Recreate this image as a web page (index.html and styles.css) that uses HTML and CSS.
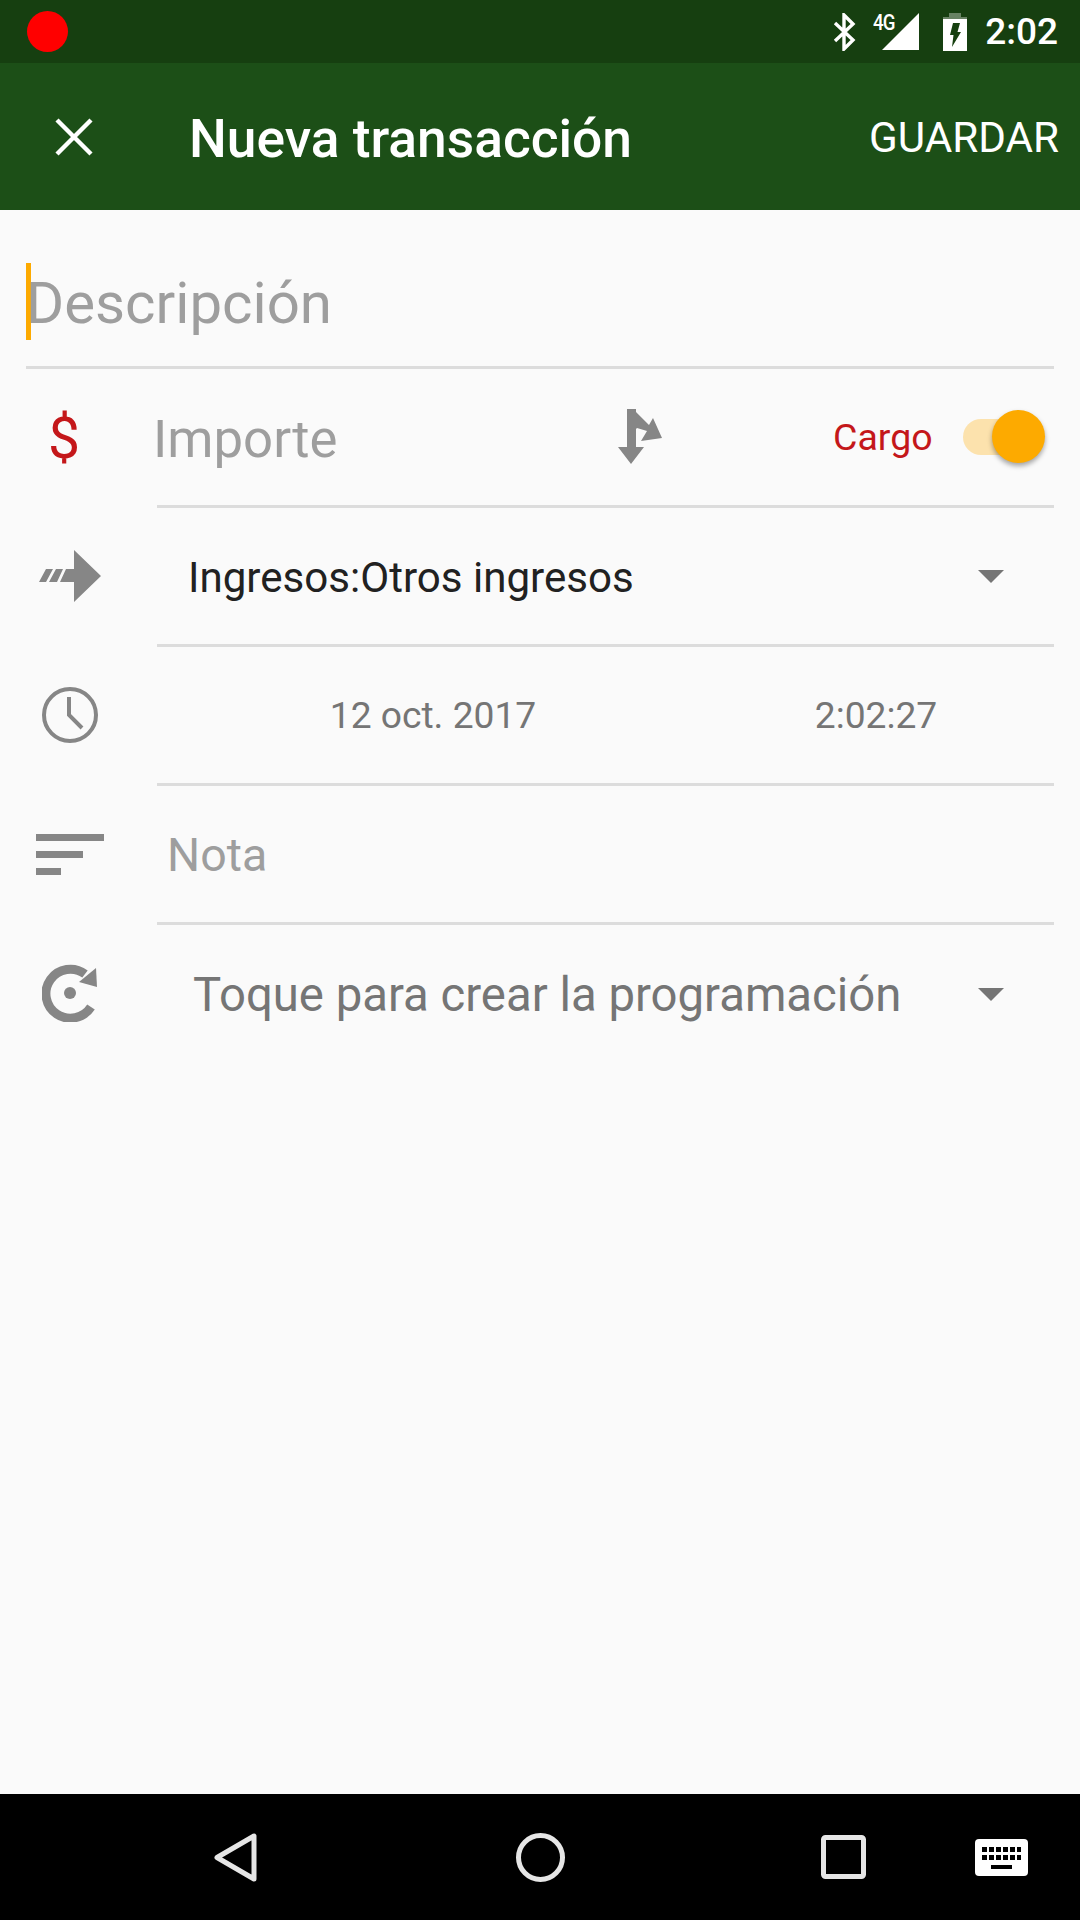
FILE: index.html
```html
<!DOCTYPE html>
<html lang="es">
  <head>
    <meta charset="UTF-8" />
    <meta name="viewport" content="width=device-width, initial-scale=1.0" />
    <title>Nueva transacción</title>
    <link rel="stylesheet" href="styles.css">
  </head>
  <body>
    <div class="phone">
      <div class="status-bar">
        <span class="rec-dot"></span>
        <div class="status-icons">
          <svg class="ic-bt" width="24" height="38" viewBox="0 0 24 38"><path d="M2 10 L20 27 L11 36 V2 L20 11 L2 28" fill="none" stroke="#fff" stroke-width="3.4"/></svg>
          <div class="signal">
            <span class="signal-label">4G</span>
            <svg width="38" height="38" viewBox="0 0 38 38"><path d="M37 0 V37 H0 Z" fill="#fff"/></svg>
          </div>
          <svg class="ic-batt" width="24" height="38" viewBox="0 0 24 38"><path d="M6 0 H18 V4 H24 V38 H0 V4 H6 Z" fill="#fff" fill-opacity="0.35"/><path d="M0 6 H24 V38 H0 Z" fill="#fff"/><path d="M10 10 H17 L14.5 19 H18 L9 34 L10.5 22 H7 Z" fill="#16400f"/></svg>
          <span class="clock">2:02</span>
        </div>
      </div>

      <div class="toolbar">
        <svg class="ic-close" width="38" height="38" viewBox="0 0 38 38"><path d="M2 2 L36 36 M36 2 L2 36" stroke="#fff" stroke-width="4.4" fill="none"/></svg>
        <span class="toolbar-title">Nueva transacción</span>
        <span class="toolbar-action">GUARDAR</span>
      </div>

      <div class="form">
        <div class="desc-row">
          <span class="caret"></span>
          <span class="desc-hint">Descripción</span>
        </div>

        <div class="row">
          <div class="row-icon"><span class="dollar">$</span></div>
          <div class="row-body">
            <span class="hint-amount">Importe</span>
            <svg class="ic-split" width="46" height="56" viewBox="0 0 46 56"><path d="M9 0 H18 V3 L31 16 L35 9 L44 29 L23 32 L29 22 L19 19 L18 20 V38 H26 L13 55 L0 38 H9 Z" fill="#868686"/></svg>
            <span class="type-label">Cargo</span>
            <div class="switch">
              <span class="switch-thumb"></span>
            </div>
          </div>
        </div>

        <div class="row">
          <div class="row-icon">
            <svg class="ic-arrow" width="62" height="52" viewBox="0 0 62 52"><path d="M35 0 L62 26 L35 52 V32 H21 L27 19 H35 Z M0 32 L7 19 H14 L7 32 Z M10 32 L17 19 H24 L18 32 Z" fill="#868686"/></svg>
          </div>
          <div class="row-body">
            <span class="account">Ingresos:Otros ingresos</span>
            <span class="spinner-arrow"></span>
          </div>
        </div>

        <div class="row">
          <div class="row-icon">
            <svg width="56" height="56" viewBox="0 0 56 56"><circle cx="28" cy="28" r="26" fill="none" stroke="#868686" stroke-width="4"/><path d="M27 10 V28 L40 41" fill="none" stroke="#868686" stroke-width="4"/></svg>
          </div>
          <div class="row-body date-cells">
            <span>12 oct. 2017</span>
            <span>2:02:27</span>
          </div>
        </div>

        <div class="row">
          <div class="row-icon">
            <div class="ic-lines">
              <span class="line-long"></span>
              <span class="line-mid"></span>
              <span class="line-short"></span>
            </div>
          </div>
          <div class="row-body">
            <span class="hint-note">Nota</span>
          </div>
        </div>

        <div class="row row-last">
          <div class="row-icon">
            <svg width="56" height="58" viewBox="0 0 56 58"><path d="M49 43 A24.5 24.5 0 1 1 43 10" fill="none" stroke="#868686" stroke-width="9"/><path d="M54 4 L55 23 L37 18 Z" fill="#868686"/><circle cx="28" cy="29" r="6" fill="#868686"/></svg>
          </div>
          <div class="row-body">
            <span class="schedule">Toque para crear la programación</span>
            <span class="spinner-arrow"></span>
          </div>
        </div>
      </div>

      <div class="nav-bar">
        <svg class="nav-back" width="43" height="49" viewBox="0 0 43 49"><path d="M40 3 V46 L3 24.5 Z" fill="none" stroke="#e6e6e6" stroke-width="5" stroke-linejoin="round"/></svg>
        <svg class="nav-home" width="49" height="49" viewBox="0 0 49 49"><circle cx="24.5" cy="24.5" r="22" fill="none" stroke="#e6e6e6" stroke-width="5"/></svg>
        <svg class="nav-recent" width="45" height="44" viewBox="0 0 45 44"><rect x="2.5" y="2.5" width="40" height="39" rx="2" fill="none" stroke="#e6e6e6" stroke-width="5"/></svg>
        <svg class="nav-keys" width="53" height="37" viewBox="0 0 53 37"><rect width="53" height="37" rx="4" fill="#fff"/><path d="M7 8 h5 v5 h-5z M14 8 h5 v5 h-5z M21 8 h5 v5 h-5z M28 8 h5 v5 h-5z M35 8 h5 v5 h-5z M42 8 h4 v5 h-4z M7 16 h5 v5 h-5z M14 16 h5 v5 h-5z M21 16 h5 v5 h-5z M28 16 h5 v5 h-5z M35 16 h5 v5 h-5z M42 16 h4 v5 h-4z M16 26 h21 v4 h-21z" fill="#000"/></svg>
      </div>
    </div>
  </body>
</html>
```

FILE: styles.css
```css
* {
  box-sizing: border-box;
}
body {
  margin: 0;
  padding: 0;
  font-family: Roboto, "Liberation Sans", sans-serif;
  background-color: #fafafa;
}
.phone {
  width: 1080px;
  height: 1920px;
  display: flex;
  flex-direction: column;
}

/* status bar */
.status-bar {
  height: 63px;
  background-color: #163f10;
  display: flex;
  align-items: center;
  justify-content: space-between;
  padding: 0 22px 0 27px;
}
.rec-dot {
  width: 41px;
  height: 41px;
  border-radius: 50%;
  background-color: #ff0000;
}
.status-icons {
  display: flex;
  align-items: center;
  color: #fff;
}
.ic-bt {
  margin-right: 25px;
}
.signal {
  position: relative;
  width: 38px;
  height: 38px;
  margin-right: 23px;
}
.signal-label {
  position: absolute;
  left: -9px;
  top: -1px;
  font-size: 22px;
  line-height: 22px;
  font-weight: 500;
  letter-spacing: -1px;
  transform: scaleX(0.85);
  transform-origin: left top;
}
.ic-batt {
  margin-right: 18px;
}
.clock {
  font-size: 37px;
  font-weight: 500;
  line-height: 40px;
}

/* toolbar */
.toolbar {
  height: 147px;
  background-color: #1c4f17;
  display: flex;
  align-items: center;
  color: #fff;
  padding: 0 21px 0 55px;
}
.ic-close {
  margin-right: 96px;
}
.toolbar-title {
  flex: 1;
  font-size: 53.3px;
  font-weight: 500;
  padding-top: 4px;
}
.toolbar-action {
  font-size: 42.2px;
  padding-top: 2px;
}

/* form */
.form {
  flex: 1;
}
.desc-row {
  height: 159px;
  margin: 0 26px;
  border-bottom: 3px solid #dcdcdc;
  display: flex;
  align-items: center;
  padding-top: 27px;
}
.caret {
  width: 5px;
  height: 77px;
  background-color: #fdaa00;
}
.desc-hint {
  font-size: 58.2px;
  color: #9e9e9e;
  margin-left: -5px;
  padding-top: 2px;
}
.row {
  height: 139px;
  display: flex;
  align-items: center;
}
.row-icon {
  width: 157px;
  height: 100%;
  display: flex;
  align-items: center;
  justify-content: center;
  padding: 0 17px 3px 0;
}
.row-body {
  flex: 1;
  height: 100%;
  margin-right: 26px;
  border-bottom: 3px solid #dcdcdc;
  display: flex;
  align-items: center;
}
.row-last .row-body {
  border-bottom: none;
}
.dollar {
  font-size: 57px;
  color: #c4171a;
  margin: 3px 12px 0 0;
}
.hint-amount {
  font-size: 52.7px;
  color: #9e9e9e;
  margin-left: -4px;
  width: 465px;
  padding-top: 3px;
}
.ic-split {
  flex-shrink: 0;
}
.type-label {
  font-size: 37.5px;
  color: #c4171a;
  margin-left: 169px;
  width: 98px;
  white-space: nowrap;
}
.switch {
  position: relative;
  width: 66px;
  height: 36px;
  margin-left: 32px;
  border-radius: 18px;
  background-color: #fce2ad;
}
.switch-thumb {
  position: absolute;
  left: 29px;
  top: -9px;
  width: 53px;
  height: 53px;
  border-radius: 50%;
  background-color: #fdaa00;
  box-shadow: 0 3px 5px rgba(0, 0, 0, 0.35);
}
.account {
  flex: 1;
  font-size: 42.1px;
  color: #212121;
  margin-left: 31px;
  padding-top: 2px;
}
.spinner-arrow {
  width: 0;
  height: 0;
  border-left: 13px solid transparent;
  border-right: 13px solid transparent;
  border-top: 13px solid #757575;
  margin-right: 50px;
}
.date-cells {
  display: grid;
  grid-template-columns: 552px 334px;
  justify-items: center;
  font-size: 37.2px;
  color: #757575;
}
.ic-lines {
  width: 68px;
  display: flex;
  flex-direction: column;
  gap: 10px;
}
.ic-lines span {
  height: 7px;
  background-color: #868686;
}
.line-long {
  width: 68px;
}
.line-mid {
  width: 47px;
}
.line-short {
  width: 25px;
}
.hint-note {
  font-size: 46.5px;
  color: #9e9e9e;
  margin-left: 10px;
  padding-top: 2px;
}
.schedule {
  flex: 1;
  font-size: 47.3px;
  color: #757575;
  margin-left: 36px;
}

/* nav bar */
.nav-bar {
  height: 126px;
  background-color: #000;
  display: flex;
  align-items: center;
  padding-left: 214px;
}
.nav-home {
  margin-left: 259px;
}
.nav-recent {
  margin-left: 256px;
}
.nav-keys {
  margin-left: 109px;
}
```
